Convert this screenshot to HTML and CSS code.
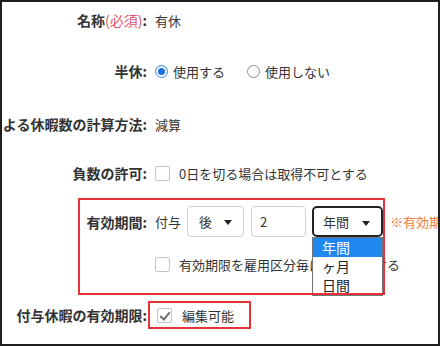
FILE: index.html
```html
<!DOCTYPE html>
<html lang="ja">

<head>
  <meta charset="UTF-8">
  <title>休暇設定</title>
  <link rel="stylesheet" href="styles.css">
</head>

<body>
  <div class="frame">
    <div class="row first">
      <div class="label">名称<span class="req">(必須)</span>:</div>
      <div class="value">有休</div>
    </div>
    <div class="row second">
      <div class="label">半休:</div>
      <div class="value">
        <span class="radio"><span class="dot on"></span>使用する</span>
        <span class="radio"><span class="dot"></span>使用しない</span>
      </div>
    </div>
    <div class="row third">
      <div class="label">雇用区分による休暇数の計算方法:</div>
      <div class="value">減算</div>
    </div>
    <div class="row fourth">
      <div class="label">負数の許可:</div>
      <div class="value"><span class="check"></span>0日を切る場合は取得不可とする</div>
    </div>
    <div class="mark">
      <div class="row period">
        <div class="label">有効期間:</div>
        <div class="value">
          付与
          <div class="select after">後<span class="caret"></span></div>
          <div class="input">2</div>
          <div class="select unit">年間<span class="caret"></span>
            <ul class="menu">
              <li class="active">年間</li>
              <li>ヶ月</li>
              <li>日間</li>
            </ul>
          </div>
          <span class="note">※有効期間は付与日から計算されます</span>
        </div>
      </div>
      <div class="row per-type">
        <div class="label"></div>
        <div class="value"><span class="check"></span>有効期限を雇用区分毎に個別設定する</div>
      </div>
    </div>
    <div class="row last">
      <div class="label">付与休暇の有効期限:</div>
      <div class="editable"><span class="check on"></span>編集可能</div>
    </div>
  </div>
</body>

</html>
```

FILE: styles.css
```css
* {
  margin: 0;
  padding: 0;
  box-sizing: border-box;
}

body {
  background-color: #fff;
  font-family: "Noto Sans CJK JP", "Noto Sans", sans-serif;
  font-size: 13px;
  color: #333;
}

.frame {
  height: 346px;
  border: 2px solid #1e1e1e;
  overflow: hidden;
}

.row {
  display: flex;
  align-items: center;
  height: 30px;
  white-space: nowrap;
}

.label {
  flex: 0 0 145px;
  min-width: 0;
  display: flex;
  justify-content: flex-end;
  font-size: 14px;
  font-weight: bold;
  color: #333;
}

.req {
  color: #e0566b;
  font-weight: normal;
}

.value {
  display: flex;
  align-items: center;
  margin-left: 8px;
}

.first {
  margin-top: 3px;
}

.second {
  margin-top: 21px;
}

.third {
  margin-top: 23px;
}

.fourth {
  margin-top: 19px;
}

.radio {
  display: flex;
  align-items: center;
  margin-right: 22px;
}

.dot {
  width: 13px;
  height: 13px;
  border: 1px solid #8a8a8a;
  border-radius: 50%;
  margin-right: 5px;
  background-color: #fff;
}

.dot.on {
  border-color: #5a9be6;
  background-color: #1a6fe0;
  box-shadow: inset 0 0 0 2px #fff;
}

.check {
  width: 15px;
  height: 15px;
  border: 1px solid #c6c6c6;
  border-radius: 2px;
  margin-right: 9px;
  background-color: #fff;
}

.check.on {
  position: relative;
  margin-right: 10px;
}

.check.on::after {
  content: "";
  position: absolute;
  left: 4px;
  top: 1px;
  width: 4px;
  height: 8px;
  border: solid #6e6e6e;
  border-width: 0 2px 2px 0;
  transform: rotate(40deg);
}

/* red annotation boxes */
.mark {
  position: relative;
  margin: 10px 0 0 76px;
  width: 307px;
  height: 97px;
  padding: 6px 0 0 2px;
}

.mark::after {
  content: "";
  position: absolute;
  inset: 0;
  border: 2px solid #e53238;
  z-index: 3;
  pointer-events: none;
}

.mark .label {
  flex-basis: 67px;
}

.period {
  height: 31px;
  margin-top: 2px;
}

.select,
.input {
  position: relative;
  display: flex;
  align-items: center;
  height: 31px;
  border: 1px solid #cfcfcf;
  border-radius: 4px;
  background-color: #fff;
}

.select.after {
  width: 57px;
  margin-left: 6px;
  padding-left: 11px;
}

.input {
  width: 55px;
  margin-left: 7px;
  padding-left: 8px;
}

.select.unit {
  width: 71px;
  margin-left: 6px;
  padding-left: 9px;
  border: 2px solid #222;
  border-radius: 5px;
}

.caret {
  position: absolute;
  right: 11px;
  top: 13px;
  border-left: 4px solid transparent;
  border-right: 4px solid transparent;
  border-top: 5px solid #222;
}

.menu {
  position: absolute;
  left: -2px;
  top: 29px;
  width: 71px;
  list-style: none;
  background-color: #fff;
  border: 1px solid #767676;
  z-index: 2;
}

.menu li {
  height: 19px;
  line-height: 19px;
  padding-left: 9px;
  font-size: 14px;
  color: #222;
}

.menu li.active {
  background-color: #1e88f0;
  color: #fff;
}

.note {
  margin-left: 7px;
  color: #f07b3f;
}

.per-type {
  margin-top: 12px;
}

.last {
  height: 28px;
  margin-top: 6px;
}

.editable {
  display: flex;
  align-items: center;
  height: 28px;
  margin-left: 1px;
  border: 2px solid #e53238;
  padding: 0 15px 0 7px;
}
```
